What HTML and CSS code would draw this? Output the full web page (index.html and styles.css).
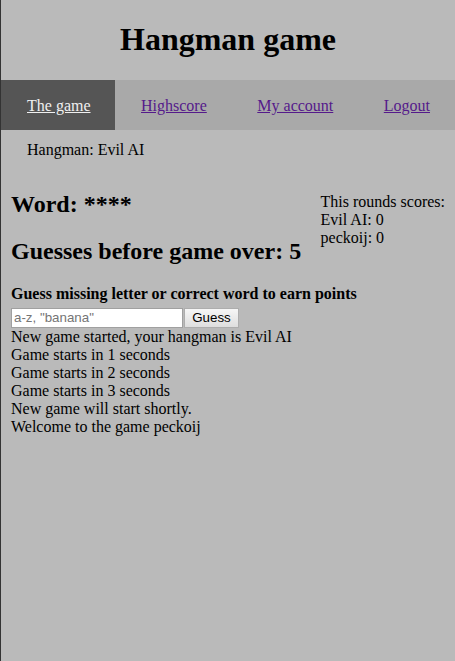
FILE: index.html
```html
<!DOCTYPE html>
<html lang="en">
<head>
<meta charset="utf-8">
<title>Hangman game</title>
<link rel="stylesheet" href="styles.css">
</head>
<body>
<div class="page">
  <header class="site-header">
    <h1 class="site-title">Hangman game</h1>
  </header>
  <nav class="main-nav">
    <ul class="nav-list">
      <li><a class="nav-link active" href="#">The game</a></li>
      <li><a class="nav-link" href="#">Highscore</a></li>
      <li><a class="nav-link" href="#">My account</a></li>
      <li><a class="nav-link" href="#">Logout</a></li>
    </ul>
  </nav>
  <p class="hangman-name">Hangman: Evil AI</p>
  <main class="game">
    <div class="game-top">
      <div class="game-info">
        <h2 class="word">Word: ****</h2>
        <h2 class="guesses">Guesses before game over: 5</h2>
      </div>
      <div class="scores">
        <div>This rounds scores:</div>
        <div>Evil AI: 0</div>
        <div>peckoij: 0</div>
      </div>
    </div>
    <p class="guess-label">Guess missing letter or correct word to earn points</p>
    <form class="guess-form">
      <input class="guess-input" type="text" placeholder="a-z, &quot;banana&quot;">
      <button class="guess-button" type="button">Guess</button>
    </form>
    <div class="log">
      <div>New game started, your hangman is Evil AI</div>
      <div>Game starts in 1 seconds</div>
      <div>Game starts in 2 seconds</div>
      <div>Game starts in 3 seconds</div>
      <div>New game will start shortly.</div>
      <div>Welcome to the game peckoij</div>
    </div>
  </main>
</div>
</body>
</html>
```

FILE: styles.css
```css
html, body {
  margin: 0;
  padding: 0;
}

body {
  background: #bababa;
  font-family: "Liberation Serif", "Times New Roman", serif;
  font-size: 16px;
  color: #000;
}

.page {
  border-left: 1px solid #333;
  min-height: 100vh;
  box-sizing: border-box;
}

.site-header {
  text-align: center;
}

.site-title {
  font-size: 32px;
  font-weight: bold;
  margin: 0;
  padding: 21.44px 0;
  line-height: 37px;
}

.main-nav {
  background: #a9a9a9;
}

.nav-list {
  list-style: none;
  margin: 0;
  padding: 0;
  display: flex;
}

.nav-list li {
  flex-shrink: 0;
}

.nav-link {
  display: block;
  white-space: nowrap;
  height: 50px;
  line-height: 51px;
  padding: 0 24.5px 0 26px;
  color: #551a8b;
  text-decoration: underline;
}

.nav-link.active {
  background: #555;
  color: #f0f0f0;
}

.hangman-name {
  margin: 0;
  padding: 11.5px 26px 0;
}

.game {
  padding: 32px 10px 0 10px;
}

.game-top {
  display: flex;
  justify-content: space-between;
  align-items: flex-start;
}

.game-info {
  white-space: nowrap;
}

.game-info h2 {
  font-size: 24px;
  font-weight: bold;
  margin: 0;
}

.game-info .guesses {
  margin-top: 19.92px;
}

.scores {
  margin-top: 2px;
  white-space: nowrap;
}

.guess-label {
  font-weight: bold;
  margin: 19.3px 0 5px;
}

.guess-form {
  display: flex;
  gap: 1px;
  margin: 0;
}

.guess-input {
  box-sizing: border-box;
  width: 172px;
  height: 20px;
  border: 1px solid #a0a0a0;
  background: #fff;
  padding: 1px 2px;
  font-family: "Liberation Sans", Arial, sans-serif;
  font-size: 13.33px;
  margin: 0;
}

.guess-input::placeholder {
  color: #757575;
}

.guess-button {
  box-sizing: border-box;
  width: 55px;
  height: 20px;
  border: 1px solid #adadad;
  background: linear-gradient(#f6f6f6, #dedede);
  font-family: "Liberation Sans", Arial, sans-serif;
  font-size: 13.33px;
  color: #000;
  padding: 0;
  margin: 0;
}

.log div {
  line-height: 18px;
}
```
